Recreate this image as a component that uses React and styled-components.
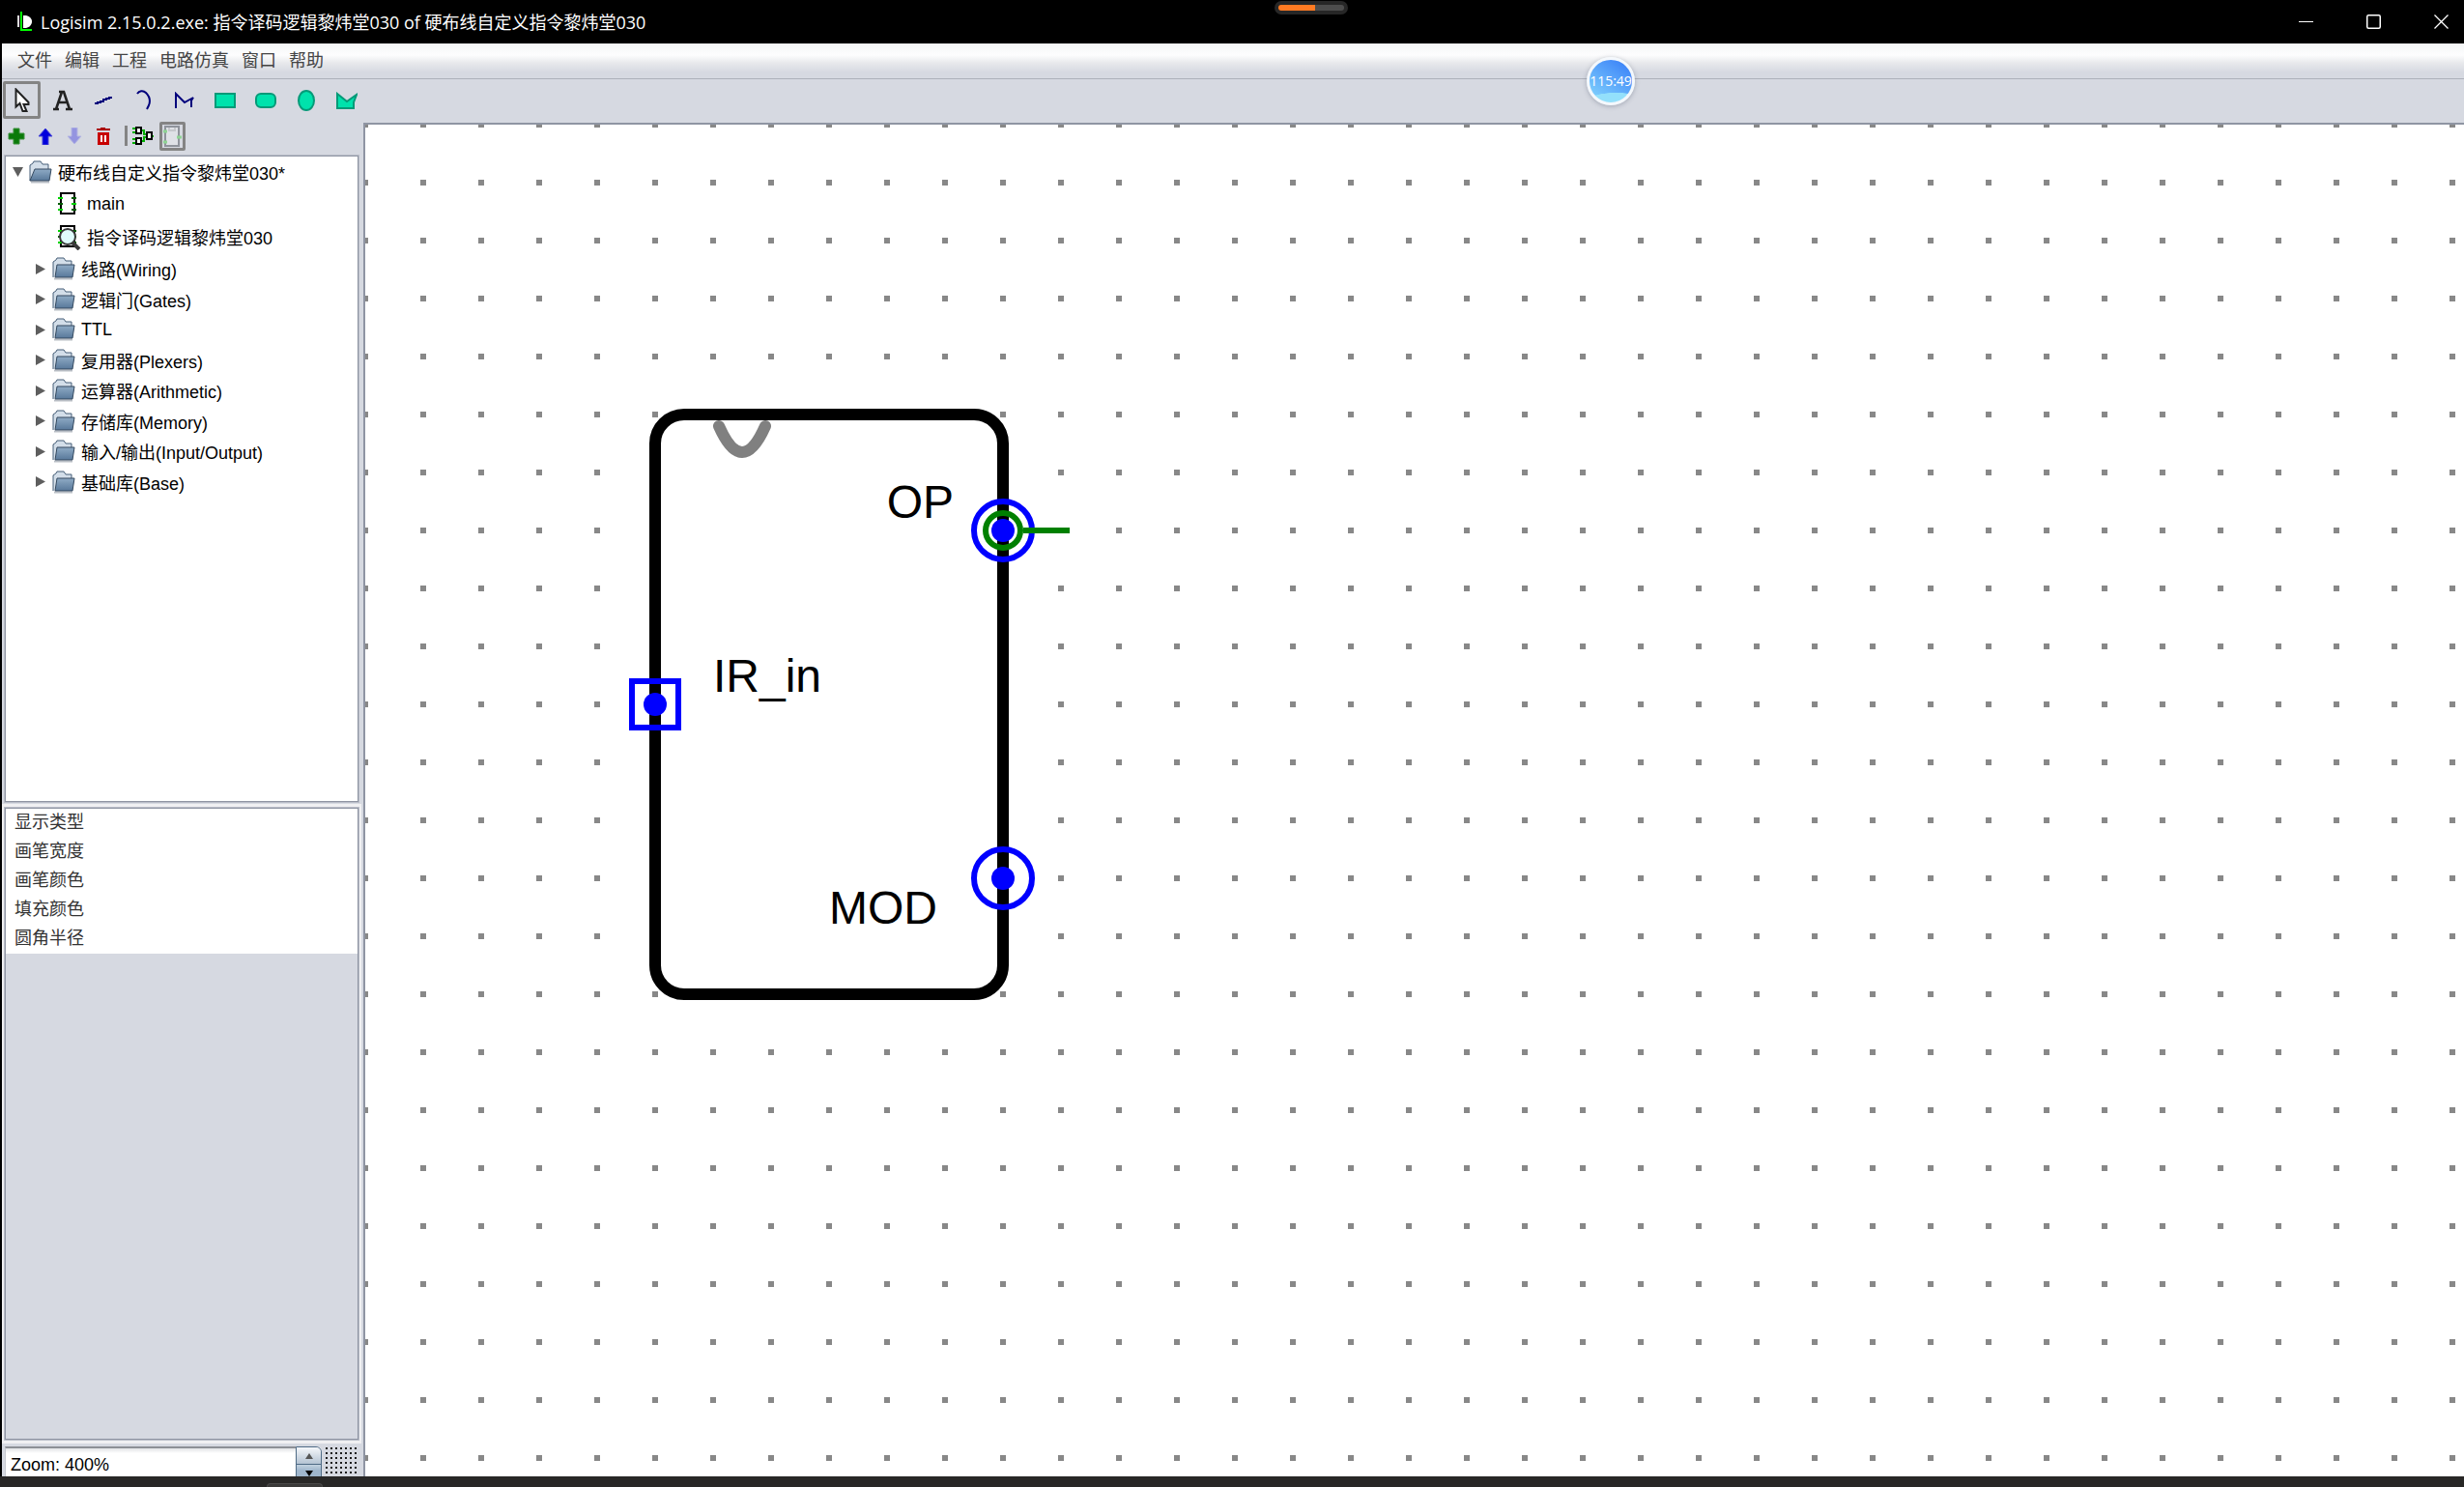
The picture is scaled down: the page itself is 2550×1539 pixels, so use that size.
import React from "react";
import styled, { createGlobalStyle } from "styled-components";

const UI_FONT = `"Liberation Sans", "Noto Sans CJK SC", sans-serif`;
const PANEL = "#d6d9e1";
const EDGE = "#8f95a3";

const GlobalStyle = createGlobalStyle`
  *, *::before, *::after { box-sizing: border-box; }
  body { margin: 0; background: #000; font-family: ${UI_FONT}; font-size: 18px; color: #000; overflow: hidden; }
  button { border: 0; padding: 0; margin: 0; background: none; font: inherit; color: inherit; }
  svg { display: block; flex: none; }
`;

const Screen = styled.div`
  position: relative;
  height: 100vh;
  display: flex;
  flex-direction: column;
`;

const TitleBar = styled.header`
  flex: none;
  height: 45px;
  padding: 0 1px 0 17px;
  display: flex;
  align-items: center;
  background: #000;
  color: #fff;
`;

const Title = styled.h1`
  flex: 1;
  margin: 0 0 0 8px;
  font: 400 18px/24px "Open Sans", "Noto Sans CJK SC", sans-serif;
  white-space: nowrap;
`;

const WindowButtons = styled.div`
  display: flex;
  gap: 24px;
`;

const WindowButton = styled.button`
  width: 46px;
  height: 45px;
  display: grid;
  place-items: center;
`;

const Window = styled.div`
  flex: 1;
  min-height: 0;
  display: flex;
  flex-direction: column;
  border-left: 2px solid #000;
  background: ${PANEL};
`;

const MenuBar = styled.nav`
  flex: none;
  height: 37px;
  padding-left: 16px;
  display: flex;
  align-items: center;
  gap: 13px;
  border-bottom: 1px solid #acb0ba;
  background: linear-gradient(#f4f6f6 0, #fdfdfe 12px, #e8e9ec 20px, ${PANEL} 30px);
`;

const MenuButton = styled.button`
  color: #444;
  line-height: 34px;
`;

const ToolBar = styled.div`
  flex: none;
  height: 44px;
  padding: 2px 0 0 1px;
  display: flex;
  gap: 3px;
`;

const ToolButton = styled.button`
  width: 39px;
  height: 39px;
  display: grid;
  place-items: center;
  border: 3px solid ${(p) => (p.$active ? "#848484" : "transparent")};
  border-radius: 2px;
`;

const Body = styled.div`
  flex: 1;
  min-height: 0;
  display: flex;
`;

const SidePanel = styled.aside`
  flex: none;
  width: 374px;
  display: flex;
  flex-direction: column;
`;

const ProjectBar = styled.div`
  flex: none;
  height: 35px;
  display: flex;
  align-items: flex-start;
`;

const ProjectButton = styled.button`
  width: ${(p) => (p.$active ? 27 : 30)}px;
  height: 30px;
  margin-left: ${(p) => (p.$active ? 2 : 0)}px;
  display: grid;
  place-items: center;
  border: ${(p) => (p.$active ? "3px solid #848484" : "0")};
  border-radius: 2px;
`;

const Divider = styled.span`
  width: 3px;
  height: 21px;
  margin: 4px 1px 0 7px;
  background: #848484;
`;

const Tree = styled.ul`
  flex: none;
  height: 669px;
  margin: 0 5px 0 3px;
  padding: 0;
  list-style: none;
  overflow: hidden;
  border: 1px solid ${EDGE};
  outline: 1px solid #b9bdc8;
  background: #fff;
`;

const TreeItem = styled.li`
  height: ${(p) => (p.$circuit ? 34 : 31)}px;
  &:first-child, &:nth-child(even) { min-height: 32px; }
`;

const TreeButton = styled.button`
  width: 100%;
  height: 100%;
  padding-left: ${(p) => p.$indent}px;
  display: flex;
  align-items: center;
  gap: 6px;
  white-space: nowrap;
  text-align: left;
`;

const PropertyPane = styled.section`
  flex: 1;
  min-height: 0;
  margin: 2px 2px 3px 0;
  padding: 4px 3px 4px 3px;
  display: flex;
  background: #f0f0f2;
`;

const PropertyBox = styled.div`
  flex: 1;
  border: 1px solid ${EDGE};
  outline: 1px solid #b9bdc8;
  background: ${PANEL};
`;

const PropertyTable = styled.table`
  width: 100%;
  border-collapse: collapse;
  background: #fff;
`;

const PropertyName = styled.th`
  width: 50%;
  height: 30px;
  padding: 0 0 0 9px;
  font-weight: 400;
  line-height: 28px;
  text-align: left;
  vertical-align: top;
  color: #333;
`;

const PropertyValue = styled.td`
  padding: 0;
`;

const ZoomBar = styled.div`
  flex: none;
  height: 31px;
  padding-left: 3px;
  display: flex;
  overflow: hidden;
`;

const ZoomInput = styled.input`
  flex: 1;
  min-width: 0;
  height: 36px;
  padding: 0 0 0 5px;
  border: 0;
  border-top: 2px solid #8d9096;
  border-left: 1px solid #c4c7ce;
  outline: 0;
  background: linear-gradient(#e2e3e6, #fff 5px);
  font: 400 18px/34px ${UI_FONT};
  color: #000;
`;

const Spinner = styled.div`
  width: 27px;
  height: 38px;
  display: grid;
  grid-template-rows: 18px 18px;
  border: 1px solid #4f6b85;
  border-radius: 0 6px 6px 0;
  overflow: hidden;
`;

const SpinButton = styled.button`
  display: grid;
  place-items: center;
  border-bottom: 1px solid #4f6b85;
  background: ${(p) => (p.$down ? "linear-gradient(#c3d2e0, #9fb6cc 6px)" : "linear-gradient(#f5f7fa, #b4c3d3)")};
`;

const GridToggle = styled.button`
  width: 35px;
  height: 30px;
  margin: 1px 4px 0 4px;
  background-image: conic-gradient(at 2px 2px, ${PANEL} 270deg, #1c1c1c 270deg);
  background-size: 5px 5px;
`;

const Canvas = styled.main`
  flex: 1;
  min-width: 0;
  margin-top: 1px;
  border-top: 2px solid ${EDGE};
  border-left: 2px solid ${EDGE};
  overflow: hidden;
  background-color: #fff;
  background-image: conic-gradient(at 6px 6px, #fff 270deg, #888 270deg);
  background-size: 60px 60px;
  background-position: -3px -3px;
`;

const TaskStrip = styled.footer`
  flex: none;
  height: 11px;
  padding: 7px 0 0 276px;
  background: #282726;
`;

const TaskTab = styled.div`
  width: 58px;
  height: 4px;
  border: 1px solid #4a4948;
  border-bottom: 0;
  border-radius: 4px 4px 0 0;
  background: #3a3938;
`;

const RecorderPill = styled.div`
  position: absolute;
  top: 1px;
  left: 1319px;
  width: 76px;
  height: 14px;
  padding: 4px;
  border-radius: 7px;
  background: #272727;
`;

const RecorderTrack = styled.div`
  height: 6px;
  border-radius: 3px;
  background: linear-gradient(90deg, #ff7a22 38px, #4d4d4d 38px);
`;

const ClockBall = styled.div`
  position: absolute;
  top: 59px;
  left: 1642px;
  width: 50px;
  height: 50px;
  display: grid;
  place-items: center;
  border: 3px solid #f4f8fc;
  border-radius: 50%;
  background: radial-gradient(ellipse 34px 12px at 62% 104%, #93e0fb 96%, transparent),
    linear-gradient(215deg, #3f86f8 12%, #7fd0fd 90%);
  box-shadow: 0 1px 5px rgba(80, 90, 110, 0.4);
  font: 400 14px/20px "Open Sans", sans-serif;
  color: #fff;
`;

const AppLogo = () => (
  <svg width="17" height="22" viewBox="0 0 17 22">
    <path d="M1 4h2v12H1z" fill="#ddd" />
    <path d="M7 4h3c9 2 7 12 0 13H7z" fill="#fff" />
    <path d="M4 0h2v18h10v2H4z" fill="#0f0" />
  </svg>
);

const toolIcons = [
  ["选择", <svg width="16" height="26" viewBox="0 0 16 26"><path d="M1.5 1.5v18l4-3.500 3 8h4l-3-7h5v-2z" fill="#fff" stroke="#222" strokeWidth="2" /></svg>],
  ["文本", <svg width="22" height="22" viewBox="0 0 22 22"><path d="M4 20 10 2h2l6 18M6 13h9M1 20h6M14 20h7M7 2h5" fill="none" stroke="#222" strokeWidth="2.600" /></svg>],
  ["直线", <svg width="20" height="10" viewBox="0 0 20 10" shapeRendering="crispEdges"><path d="M1 8h3v-1h3v-1h3v-2h3v-1h3v-1h3" fill="none" stroke="#00007c" strokeWidth="2" /></svg>],
  ["曲线", <svg width="16" height="22" viewBox="0 0 16 22"><path d="M1 4c2-3 6-4 9-1s5 8 3 13l-2 4" fill="none" stroke="#00007c" strokeWidth="2" /></svg>],
  ["折线", <svg width="22" height="18" viewBox="0 0 22 18"><path d="M2 17V2l9 9 9-5-2 3v7" fill="none" stroke="#00007c" strokeWidth="2" /></svg>],
  ["矩形", <svg width="22" height="16" viewBox="0 0 22 16"><path d="M1 1h20v14H1z" fill="#00e2ac" stroke="#059a78" strokeWidth="2" /></svg>],
  ["圆角矩形", <svg width="22" height="16" viewBox="0 0 22 16"><rect x="1" y="1" width="20" height="14" rx="5" fill="#00e2ac" stroke="#059a78" strokeWidth="2" /></svg>],
  ["椭圆", <svg width="20" height="22" viewBox="0 0 20 22"><ellipse cx="10" cy="11" rx="8" ry="10" fill="#00e2ac" stroke="#059a78" strokeWidth="2" /></svg>],
  ["多边形", <svg width="22" height="18" viewBox="0 0 22 18"><path d="M1 2v15h17v-6l3-8-10 7z" fill="#00e2ac" stroke="#059a78" strokeWidth="2" /></svg>],
];

const ArrowGlyph = ({ color, edge, down }) => (
  <svg width="16" height="18" viewBox="0 0 16 18">
    <path d={down ? "M5 0h6v9h4l-7 8-7-8h4z" : "M5 18h6V9h4L8 1 1 9h4z"} fill={color} stroke={edge} />
  </svg>
);

const projectIcons = [
  ["添加电路", <svg width="18" height="18" viewBox="0 0 18 18"><path d="M6 1h6v5h5v6h-5v5H6v-5H1V6h5z" fill="#0a7a0a" stroke="#3b913b" /></svg>],
  ["上移", <ArrowGlyph color="#0000dc" edge="#4a4ad6" />],
  ["下移", <ArrowGlyph color="#9494e0" edge="#b4b6e2" down />],
  ["删除", <svg width="16" height="18" viewBox="0 0 16 18"><path d="M1 2h14M5 1h5" stroke="#a00" strokeWidth="2" /><path d="M2 5h12v13H2z" fill="#c80000" /><path d="M6 8v7M10 8v7" stroke="#fff" strokeWidth="2" /></svg>],
];

const CircuitIcon = () => (
  <svg width="22" height="20" viewBox="0 0 22 20">
    <path d="M0 2h4M0 6h4M0 13h4M0 17h4M9 4h3v4h4M9 15h3v-4h4M20 10h2" fill="none" stroke="#00b000" strokeWidth="2" />
    <path d="M4 1h5v6H4zM4 12h5v6H4zM15 6h5v7h-5z" fill="#fff" stroke="#000" strokeWidth="2" />
  </svg>
);

const AppearanceIcon = () => (
  <svg width="19" height="22" viewBox="0 0 19 22">
    <path d="M2 1h14v20H2z" fill="#dfe1e6" stroke="#8f939b" strokeWidth="2" />
    <path d="M6 2v3h6V2" fill="none" stroke="#c6c8cc" strokeWidth="2" />
    <path d="M0 6h4M0 17h4M14 12h5" stroke="#8fd494" strokeWidth="3" />
  </svg>
);

const FolderIcon = ({ open }) => (
  <svg width="24" height="24" viewBox="0 0 24 24">
    <path d="M2 22.500h19" stroke="#b9bec5" strokeWidth="2" />
    <path d="M1 21V5l3-2 1-2h7l2 3h6v5" fill="#d3dee9" stroke="#475f78" />
    {open
      ? <path d="M1 21 6 9h17l-2 12z" fill="url(#folderFront)" stroke="#34495f" />
      : <path d="M3 21 5 8h18l-2 13z" fill="url(#folderFront)" stroke="#34495f" />}
    <defs>
      <linearGradient id="folderFront" x1="0" y1="0" x2="0" y2="1">
        <stop offset="0" stopColor="#8fabc5" />
        <stop offset="1" stopColor="#58789a" />
      </linearGradient>
    </defs>
  </svg>
);

const ChipIcon = ({ viewed }) => (
  <svg width="24" height="28" viewBox="0 0 24 28" shapeRendering={viewed ? "auto" : "crispEdges"}>
    <path d="M3 3h14v21H3z" fill="#fff" stroke="#000" strokeWidth="2" />
    <path d="M0 8h5M0 20h5M14 14h5" stroke="#00d200" strokeWidth="2" />
    <path d="M0 14h5M14 8h5M14 20h5" stroke="#005a00" strokeWidth="2" />
    {viewed && (
      <g stroke="#3a3a3a">
        <path d="m15 20 7 7" strokeWidth="4" />
        <circle cx="10" cy="14" r="8" fill="#dffcfc" strokeWidth="2" />
      </g>
    )}
  </svg>
);

const Twisty = ({ open }) => (
  <svg width="11" height="11" viewBox="0 0 11 11">
    <path d={open ? "M0 0h11L5.500 10z" : "M0 0v11l10-5.500z"} fill="#5e5e5e" />
  </svg>
);

const libraries = [
  "线路(Wiring)", "逻辑门(Gates)", "TTL", "复用器(Plexers)", "运算器(Arithmetic)",
  "存储库(Memory)", "输入/输出(Input/Output)", "基础库(Base)",
];
const circuits = [["main", false], ["指令译码逻辑黎炜堂030", true]];
const menus = ["文件", "编辑", "工程", "电路仿真", "窗口", "帮助"];
const properties = ["显示类型", "画笔宽度", "画笔颜色", "填充颜色", "圆角半径"];

const Port = ({ x, y, input }) => (
  <g transform={`translate(${x} ${y})`}>
    {input
      ? <rect x="-24" y="-24" width="48" height="48" fill="none" stroke="#00f" strokeWidth="6" />
      : <circle r="30" fill="none" stroke="#00f" strokeWidth="6" />}
    <circle r="12" fill="#00f" />
  </g>
);

const Appearance = () => (
  <svg width="800" height="960" viewBox="0 0 800 960" fontFamily={UI_FONT} fontSize="48">
    <rect x="300" y="300" width="360" height="600" rx="30" fill="#fff" stroke="#000" strokeWidth="12" />
    <path d="M366 312q24 54 48 0" fill="none" stroke="#808080" strokeWidth="12" strokeLinecap="round" />
    <text x="609" y="407" textAnchor="end">OP</text>
    <text x="360" y="587">IR_in</text>
    <text x="592" y="827" textAnchor="end">MOD</text>
    <Port x={300} y={600} input />
    <Port x={660} y={420} />
    <Port x={660} y={780} />
    <g fill="none" stroke="#008000" strokeWidth="6">
      <circle cx="660" cy="420" r="18" />
      <path d="M681 420h48" />
    </g>
  </svg>
);

export default function App() {
  return (
    <Screen>
      <GlobalStyle />
      <TitleBar>
        <AppLogo />
        <Title>Logisim 2.15.0.2.exe: 指令译码逻辑黎炜堂030 of 硬布线自定义指令黎炜堂030</Title>
        <WindowButtons>
          <WindowButton aria-label="最小化"><svg width="15" height="15"><path d="M0 7.500h15" stroke="#fff" /></svg></WindowButton>
          <WindowButton aria-label="最大化"><svg width="15" height="15"><rect x="0.750" y="0.750" width="13.500" height="13.500" rx="1.500" fill="none" stroke="#fff" strokeWidth="1.500" /></svg></WindowButton>
          <WindowButton aria-label="关闭"><svg width="15" height="15"><path d="m.5.5 14 14m0-14-14 14" stroke="#fff" strokeWidth="1.300" /></svg></WindowButton>
        </WindowButtons>
      </TitleBar>
      <Window>
        <MenuBar>{menus.map((m) => <MenuButton key={m}>{m}</MenuButton>)}</MenuBar>
        <ToolBar>
          {toolIcons.map(([name, icon], i) => (
            <ToolButton key={name} aria-label={name} $active={i === 0}>{icon}</ToolButton>
          ))}
        </ToolBar>
        <Body>
          <SidePanel>
            <ProjectBar>
              {projectIcons.map(([name, icon]) => (
                <ProjectButton key={name} aria-label={name}>{icon}</ProjectButton>
              ))}
              <Divider />
              <ProjectButton aria-label="编辑电路"><CircuitIcon /></ProjectButton>
              <ProjectButton aria-label="编辑外观" $active><AppearanceIcon /></ProjectButton>
            </ProjectBar>
            <Tree>
              <TreeItem>
                <TreeButton $indent={7}><Twisty open /><FolderIcon open />硬布线自定义指令黎炜堂030*</TreeButton>
              </TreeItem>
              {circuits.map(([name, viewed]) => (
                <TreeItem key={name} $circuit>
                  <TreeButton $indent={54}><ChipIcon viewed={viewed} />{name}</TreeButton>
                </TreeItem>
              ))}
              {libraries.map((name) => (
                <TreeItem key={name}>
                  <TreeButton $indent={31}><Twisty /><FolderIcon />{name}</TreeButton>
                </TreeItem>
              ))}
            </Tree>
            <PropertyPane>
              <PropertyBox>
                <PropertyTable>
                  <tbody>
                    {properties.map((name) => (
                      <tr key={name}><PropertyName scope="row">{name}</PropertyName><PropertyValue /></tr>
                    ))}
                  </tbody>
                </PropertyTable>
              </PropertyBox>
            </PropertyPane>
            <ZoomBar>
              <ZoomInput aria-label="Zoom" defaultValue="Zoom: 400%" />
              <Spinner>
                <SpinButton aria-label="放大"><svg width="8" height="6"><path d="M0 6h8L4 0z" fill="#555" /></svg></SpinButton>
                <SpinButton aria-label="缩小" $down><svg width="8" height="6"><path d="M0 0h8L4 6z" fill="#000" /></svg></SpinButton>
              </Spinner>
              <GridToggle aria-label="网格" />
            </ZoomBar>
          </SidePanel>
          <Canvas><Appearance /></Canvas>
        </Body>
      </Window>
      <TaskStrip><TaskTab /></TaskStrip>
      <RecorderPill><RecorderTrack /></RecorderPill>
      <ClockBall>115:49</ClockBall>
    </Screen>
  );
}
